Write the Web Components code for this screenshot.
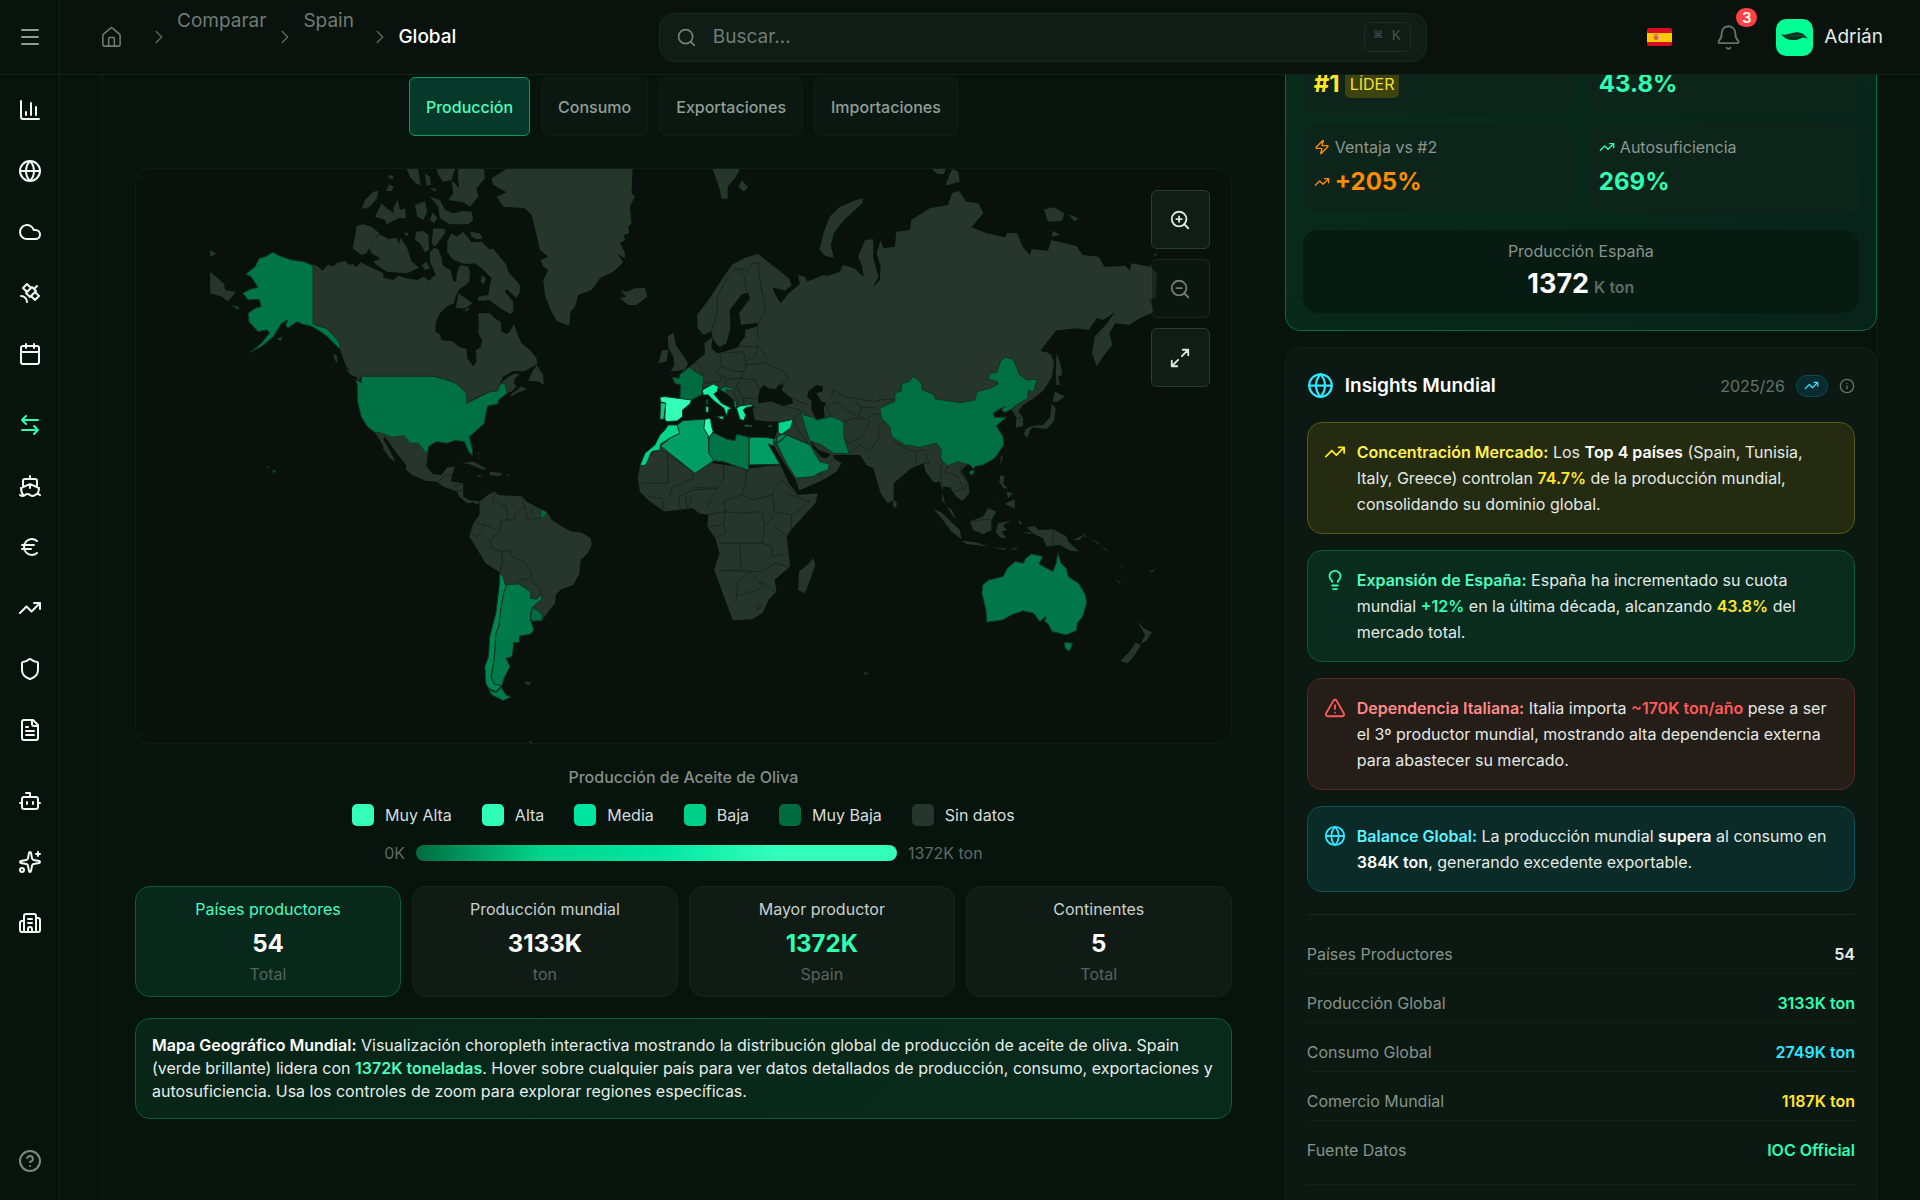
<!DOCTYPE html>
<html lang="es">
<head>
<meta charset="utf-8">
<title>Comparar · Spain · Global</title>
<style>
html,body{margin:0;height:100%}
body{background:#07130d;color:#e8efeb;font-family:Inter,"Noto Sans",sans-serif;font-size:16px;line-height:24px;
--green:#2dffb3;--mint:#4dfcc0;--yellow:#ffe62b;--cyan:#2ee6ff;--red:#ff5a5a;--muted:#87938c;--dim:#57635c;--line:#12211a}
</style>
</head>
<body>
<app-shell></app-shell>
<script>
const ICONS={
menu:'<path d="M4 5h16M4 12h16M4 19h16"/>',
chart:'<path d="M3 3v16a2 2 0 0 0 2 2h16M18 17V9M13 17V5M8 17v-3"/>',
globe:'<circle cx="12" cy="12" r="10"/><path d="M12 2a14.5 14.5 0 0 0 0 20 14.5 14.5 0 0 0 0-20M2 12h20"/>',
cloud:'<path d="M17.5 19H9a7 7 0 1 1 6.71-9h1.79a4.5 4.5 0 1 1 0 9Z"/>',
satellite:'<path d="M13 7 9 3 5 7l4 4M17 11l4 4-4 4-4-4M8 12l4 4 6-6-4-4ZM16 8l3-3M9 21a6 6 0 0 0-6-6"/>',
calendar:'<path d="M8 2v4M16 2v4M3 10h18"/><rect width="18" height="18" x="3" y="4" rx="2"/>',
swap:'<path d="M8 3 4 7l4 4M4 7h16M16 21l4-4-4-4M20 17H4"/>',
ship:'<path d="M12 10.189V14M12 2v3M19 13V7a2 2 0 0 0-2-2H7a2 2 0 0 0-2 2v6M19.38 20A11.6 11.6 0 0 0 21 14l-8.188-3.639a2 2 0 0 0-1.624 0L3 14a11.6 11.6 0 0 0 2.81 7.76M2 21c.6.5 1.2 1 2.5 1 2.5 0 2.5-2 5-2 1.3 0 1.9.5 2.5 1s1.2 1 2.5 1c2.5 0 2.5-2 5-2 1.3 0 1.9.5 2.5 1"/>',
euro:'<path d="M4 10h12M4 14h9M19 6a7.7 7.7 0 0 0-5.2-2A7.9 7.9 0 0 0 6 12c0 4.4 3.5 8 7.8 8 2 0 3.8-.8 5.2-2"/>',
trend:'<path d="M16 7h6v6M22 7l-8.500 8.500-5-5L2 17"/>',
shield:'<path d="M20 13c0 5-3.5 7.500-7.660 8.950a1 1 0 0 1-.67-.01C7.500 20.500 4 18 4 13V6a1 1 0 0 1 1-1c2 0 4.500-1.200 6.240-2.720a1.170 1.170 0 0 1 1.520 0C14.510 3.810 17 5 19 5a1 1 0 0 1 1 1z"/>',
file:'<path d="M15 2H6a2 2 0 0 0-2 2v16a2 2 0 0 0 2 2h12a2 2 0 0 0 2-2V7ZM14 2v4a2 2 0 0 0 2 2h4M10 9H8M16 13H8M16 17H8"/>',
bot:'<path d="M12 8V4H8M2 14h2M20 14h2M15 13v2M9 13v2"/><rect width="16" height="12" x="4" y="8" rx="2"/>',
sparkles:'<path d="M11.017 2.814a1 1 0 0 1 1.966 0l1.051 5.558a2 2 0 0 0 1.594 1.594l5.558 1.051a1 1 0 0 1 0 1.966l-5.558 1.051a2 2 0 0 0-1.594 1.594l-1.051 5.558a1 1 0 0 1-1.966 0l-1.051-5.558a2 2 0 0 0-1.594-1.594l-5.558-1.051a1 1 0 0 1 0-1.966l5.558-1.051a2 2 0 0 0 1.594-1.594zM20 2v4M22 4h-4"/><circle cx="4" cy="20" r="2"/>',
building:'<path d="M10 12h4M10 8h4M14 21v-3a2 2 0 0 0-4 0v3M6 10H4a2 2 0 0 0-2 2v7a2 2 0 0 0 2 2h16a2 2 0 0 0 2-2V9a2 2 0 0 0-2-2h-2M6 21V5a2 2 0 0 1 2-2h8a2 2 0 0 1 2 2v16"/>',
help:'<circle cx="12" cy="12" r="10"/><path d="M9.090 9a3 3 0 0 1 5.830 1c0 2-3 3-3 3M12 17h.01"/>',
home:'<path d="M15 21v-8a1 1 0 0 0-1-1h-4a1 1 0 0 0-1 1v8M3 10a2 2 0 0 1 .709-1.528l7-5.999a2 2 0 0 1 2.582 0l7 5.999A2 2 0 0 1 21 10v9a2 2 0 0 1-2 2H5a2 2 0 0 1-2-2z"/>',
chevron:'<path d="m9 18 6-6-6-6"/>',
search:'<circle cx="11" cy="11" r="8"/><path d="m21 21-4.350-4.350"/>',
bell:'<path d="M10.268 21a2 2 0 0 0 3.464 0M3.262 15.326A1 1 0 0 0 4 17h16a1 1 0 0 0 .74-1.673C19.410 13.956 18 12.499 18 8A6 6 0 0 0 6 8c0 4.499-1.411 5.956-2.738 7.326"/>',
zoomin:'<circle cx="11" cy="11" r="8"/><path d="m21 21-4.350-4.350M11 8v6M8 11h6"/>',
zoomout:'<circle cx="11" cy="11" r="8"/><path d="m21 21-4.350-4.350M8 11h6"/>',
expand:'<path d="M15 3h6v6M21 3l-7 7M3 21l7-7M9 21H3v-6"/>',
zap:'<path d="M4 14a1 1 0 0 1-.78-1.630l9.900-10.200a.5.5 0 0 1 .86.46l-1.920 6.020A1 1 0 0 0 13 10h7a1 1 0 0 1 .78 1.630l-9.900 10.200a.5.5 0 0 1-.86-.46l1.920-6.020A1 1 0 0 0 11 14z"/>',
bulb:'<path d="M15 14c.2-1 .7-1.700 1.500-2.500 1-.9 1.500-2.200 1.500-3.500A6 6 0 0 0 6 8c0 1 .2 2.200 1.500 3.500.7.7 1.300 1.500 1.500 2.500M9 18h6M10 22h4"/>',
alert:'<path d="m21.730 18-8-14a2 2 0 0 0-3.480 0l-8 14A2 2 0 0 0 4 21h16a2 2 0 0 0 1.730-3M12 9v4M12 17h.01"/>',
info:'<circle cx="12" cy="12" r="10"/><path d="M12 16v-4M12 8h.01"/>'
};

/* Registers an element whose open shadow root is built from its markup */
function define(tag,html){
  customElements.define(tag,class extends HTMLElement{
    constructor(){super();this.attachShadow({mode:'open'})}
    connectedCallback(){this.shadowRoot.innerHTML=typeof html==='function'?html(this):html}
  });
}
const RESET='*{box-sizing:border-box}a{color:inherit;text-decoration:none}button,input{font:inherit;color:inherit;margin:0}';

define('ui-icon',el=>{
  const s=el.getAttribute('size')||24,w=el.getAttribute('weight')||2;
  return `<style>:host{display:inline-flex;flex:none}svg{display:block}</style>
  <svg width="${s}" height="${s}" viewBox="0 0 24 24" fill="none" stroke="currentColor" stroke-width="${w}" stroke-linecap="round" stroke-linejoin="round" aria-hidden="true">${ICONS[el.getAttribute('name')]}</svg>`;
});

define('side-nav',()=>{
  const groups=[[['chart','Panel'],['globe','Mundo'],['cloud','Clima'],['satellite','Satélite'],['calendar','Calendario']],
  [['swap','Comparar'],['ship','Comercio'],['euro','Precios'],['trend','Tendencias'],['shield','Seguros'],['file','Informes']],
  [['bot','Asistente'],['sparkles','IA'],['building','Empresas']]];
  return `<style>${RESET}
  :host{display:flex;flex-direction:column;border-right:1px solid var(--line);background:#06140d}
  .top{flex:none;height:75px;border-bottom:1px solid var(--line);display:flex;align-items:center;justify-content:center;color:#8f9b94}
  button{display:flex;background:none;border:0;padding:0}
  nav{flex:1;display:flex;flex-direction:column;gap:18px;padding-top:8px}
  .g{display:flex;flex-direction:column;gap:8px}
  a{height:53px;display:flex;align-items:center;justify-content:center;color:#f3f7f5}
  a.on{color:var(--green)}
  a.help{color:#7e8983;height:79px}
  </style>
  <div class="top"><button aria-label="Menú"><ui-icon name="menu"></ui-icon></button></div>
  <nav>${groups.map(g=>`<div class="g">${g.map(([i,l])=>`<a href="#${i}" aria-label="${l}" class="${i==='swap'?'on':''}"><ui-icon name="${i}"></ui-icon></a>`).join('')}</div>`).join('')}</nav>
  <a class="help" href="#help" aria-label="Ayuda"><ui-icon name="help"></ui-icon></a>`;
});

define('bread-crumbs',`<style>${RESET}
:host{display:block}
ol{display:flex;align-items:center;gap:8px;margin:0;padding:0;list-style:none;font-size:19px;line-height:26px;color:#6f7b74}
li{display:flex;align-items:center;gap:7px}
a.t{height:58px;min-width:58px}
a.h{display:flex;width:40px}
[aria-current]{color:#fff;font-weight:500}
ui-icon[name=chevron]{color:#5a665f}
</style><nav aria-label="Ruta"><ol>
<li><a class="h" href="#home" aria-label="Inicio"><ui-icon name="home" size="23" weight="1.600"></ui-icon></a></li>
<li><ui-icon name="chevron" size="22" weight="1.600"></ui-icon><a class="t" href="#comparar">Comparar</a></li>
<li><ui-icon name="chevron" size="22" weight="1.600"></ui-icon><a class="t" href="#spain">Spain</a></li>
<li><ui-icon name="chevron" size="22" weight="1.600"></ui-icon><span aria-current="page">Global</span></li>
</ol></nav>`);

define('search-box',`<style>${RESET}
:host{display:block;flex:0 1 768px}
label{display:flex;align-items:center;gap:16px;height:49px;padding:0 15px 0 16px;background:#101c16;border:1px solid #182820;border-radius:15px;color:#75817a}
input{flex:1;min-width:0;background:none;border:0;outline:0;padding:0;font-size:19px}
input::placeholder{color:#6f7b74;opacity:1}
kbd{width:47px;height:30px;border:1px solid #1d2d25;border-radius:7px;display:flex;align-items:center;justify-content:center;font:15px/20px "Liberation Mono","DejaVu Sans Mono",monospace;color:#45524b}
</style><label><ui-icon name="search" size="21" weight="1.800"></ui-icon><input type="text" placeholder="Buscar..." aria-label="Buscar"><kbd>⌘ K</kbd></label>`);

define('user-tools',`<style>${RESET}
:host{display:flex;align-items:center}
button{background:none;border:0;padding:0;display:flex;align-items:center}
.flag{padding:0 18px}
.bell{position:relative;margin-left:24px;width:28px;justify-content:center;color:#66726b}
.badge{position:absolute;left:22px;top:-16px;min-width:21px;height:19px;border-radius:10px;background:#ff4245;color:#fff;font-size:15px;font-weight:600;line-height:19px;text-align:center}
.user{margin-left:34px;gap:11px;font-size:19px;line-height:26px;color:#e3eae6}
</style>
<button class="flag" aria-label="Idioma"><svg width="25" height="18" viewBox="0 0 25 18"><rect width="25" height="18" rx="2" fill="#d80d22"/><path d="M0 5h25v9H0z" fill="#ffc800"/><path d="M6 7h1v5H6zM11 7h1v5h-1z" fill="#c9b183"/><path d="M7 8h4v3q-2 2-4 0z" fill="#d9604a"/><path d="M7.500 6h3v1.500h-3z" fill="#c8702e"/></svg></button>
<button class="bell" aria-label="Avisos"><ui-icon name="bell" size="27" weight="1.600"></ui-icon><span class="badge">3</span></button>
<button class="user"><svg width="37" height="37" viewBox="0 0 37 37"><rect width="37" height="37" rx="10" fill="#00ff94"/><path d="M5 15C9 16.500 12 15 16 14c7-2 12 0 15 5l2 2-3-2c-4-2-5 1.500-11 2-7 .5-11-2-14-6z" fill="#06301f"/><path d="M9 17c6 1 12-2 20 0" stroke="#0b7048" fill="none" stroke-width=".7"/></svg><span>Adrián</span></button>`);

define('top-bar',`<style>:host{display:flex;align-items:center;justify-content:space-between;height:74px;padding:0 37px 0 40px;border-bottom:1px solid var(--line);background:#09120d}</style>
<bread-crumbs></bread-crumbs><search-box></search-box><user-tools></user-tools>`);

define('metric-tabs',`<style>${RESET}
:host{display:flex;justify-content:center;gap:11px}
button{height:59px;padding:0 16px;border:1px solid #101e17;border-radius:6px;background:#0a1811;color:#929e97;font-size:16px;font-weight:500}
button.on{background:#07392a;border-color:#0b9a64;color:var(--mint)}
</style><button class="on">Producción</button><button>Consumo</button><button>Exportaciones</button><button>Importaciones</button>`);

define('world-map',`<style>${RESET}
:host{display:block;position:relative;border:1px solid #0f1d16;border-radius:15px;overflow:hidden;background:#08110c}
svg.map{display:block;width:100%;height:auto}
svg.map path{vector-effect:non-scaling-stroke;stroke-width:1;stroke-linejoin:round}
.n{fill:#26362d}.s{fill:#08110c}
.b{fill:none;stroke:#17261e}
.c{stroke:#123324}
.ctl{position:absolute;top:21px;right:21px;display:flex;flex-direction:column;gap:10px}
button{width:59px;height:59px;padding:0;display:flex;align-items:center;justify-content:center;background:#101c16;border:1px solid #2c3b33;border-radius:6px;color:#dde5e1}
button:disabled{opacity:.5}
</style>
<svg class="map" viewBox="136 169 1095 574" role="img" aria-label="Mapa mundial de producción">
<g transform="translate(330 165) scale(.33333)">
<path class="n" d="M-51 297-35 305-22 317-8 300 10 304 22 293 45 288 58 300 68 296 78 306 92 292 120 305 160 325 160 338 190 345 205 332 230 340 262 345 280 335 300 348 305 338 318 330 300 290 300 262 312 248 325 252 335 280 338 300 350 310 362 315 370 348 378 350 382 320 392 300 415 305 420 320 418 350 400 365 388 372 375 400 372 415 350 425 330 445 318 470 316 500 330 508 335 525 370 530 385 545 410 552 412 580 430 605 440 590 438 555 452 548 457 525 445 505 447 480 445 445 480 445 495 460 512 470 515 500 530 507 540 500 552 478 562 505 575 535 600 555 620 580 622 598 600 610 580 620 550 618 520 635 508 657 530 640 555 625 570 628 555 640 552 655 560 665 545 680 530 685 525 655 512 655 503 675 480 680 440 698 410 714 405 690 380 655 345 642 315 634 95 634 85 645 60 615 48 605 40 580 30 555 5 510-10 490-40 485-51 478Z
M540 690 575 665 592 672 560 685 545 694ZM620 600 640 630 642 660 625 650 595 648 605 625ZM48 612 75 622 95 650 85 640 60 628ZM10 565 22 575 22 595 14 585Z
M80 182 100 178 125 185 148 205 125 235 110 265 95 270 68 250 75 215Z
M150 208 175 222 200 218 206 238 212 218 232 250 245 290 268 308 230 325 170 320 140 300 130 290 152 281 125 265 118 250 130 228Z
M155 115 170 130 193 145 190 130 203 105 210 135 225 130 228 160 205 160 170 178 165 165 135 155Z
M130 80 145 78 142 100 120 125 95 132 105 105ZM178 58 192 65 185 78 168 78ZM178 30 190 32 190 42 176 40ZM230 12 265 12 272 60 260 58 240 35ZM285 25 300 35 303 60 290 62Z
M320 12 375 12 365 45 340 50 325 30ZM385 12 462 12 465 40 440 70 445 95 420 125 400 112 355 105 370 85 365 45 388 70 384 40Z
M300 95 330 105 345 135 370 145 400 138 425 140 430 165 415 178 360 178 330 160 325 125ZM255 120 285 108 292 140 280 165 262 155ZM308 142 322 160 312 175 300 165ZM300 68 320 72 315 80Z
M258 200 280 198 295 210 298 255 285 262 270 235 255 225ZM310 190 345 192 345 205 315 245 305 235ZM222 203 236 203 230 215Z
M365 205 380 215 400 200 425 232 455 230 480 255 488 250 510 275 530 300 535 320 570 360 570 380 560 400 530 372 525 380 550 410 550 440 540 448 490 415 480 405 445 408 445 395 475 390 480 360 485 340 455 310 435 295 405 297 370 285 352 262 352 230Z
M420 200 450 205 458 222 440 222 425 215ZM275 300 290 290 300 310 285 315ZM385 385 410 402 428 415 405 430 378 430ZM400 440 415 425 417 435ZM455 330 468 340 462 358 452 350Z
M530 12 908 12 905 85 915 95 900 125 905 175 895 185 898 205 882 210 885 225 870 235 885 262 885 280 862 265 880 292 850 320 810 340 785 375 745 390 735 425 722 440 718 482 680 468 660 430 645 390 640 345 655 315 640 305 632 285 655 275 630 255 620 210 605 150 585 130 520 125 500 95 530 82 490 60 485 40Z
M872 375 890 380 915 370 945 368 952 395 920 420 895 420 870 400 888 395Z"/>
</g>
<g transform="scale(.40816 .33333)">
<path class="n" d="M515 815 548 850 552 870 578 875 558 905 545 890 515 880ZM515 750 530 762 515 770Z"/>
<path class="c" fill="#007545" d="M668 757 690 770 715 780 745 785 767 797 767 972 780 978 800 985 812 1000 830 1025 836 1050 822 1035 800 1008 785 995 765 980 740 972 728 965 705 985 700 975 705 960 690 970 670 1010 640 1040 612 1058 640 1030 660 1000 655 990 632 995 610 965 608 940 625 925 640 920 635 898 608 900 595 880 612 868 632 862 615 830 602 822 625 800 635 775 650 770ZM568 916 585 922 583 928ZM680 1018 690 1010 688 1022Z"/>
</g>
<g transform="translate(0 400) scale(.40816 .33333)">
<path class="c" fill="#007143" d="M886-71 1062-71 1090-62 1118-50 1143-19 1144 10 1168-5 1200-24 1219-28 1227-50 1237-50 1243-20 1222 0 1220 12 1195 18 1190 45 1187 70 1160 100 1150 110 1158 150 1157 167 1148 155 1138 125 1115 122 1095 130 1070 125 1050 140 1048 160 1040 155 1025 130 1005 130 990 108 960 112 935 100 918 97 900 80 885 50 876 5 876-40 872-62 885-52ZM668 210 676 214 671 220ZM655 200 660 203 656 204Z"/>
<path class="n" d="M918 97 935 100 960 112 990 108 1005 130 1025 130 1040 155 1048 160 1045 200 1060 222 1082 225 1095 203 1115 200 1108 225 1105 245 1135 250 1135 290 1150 300 1175 305 1170 315 1160 308 1145 310 1125 290 1120 275 1085 260 1070 245 1045 243 1010 225 995 210 995 195 975 165 955 130 942 110 940 120 955 150 970 187 955 175 938 145 940 140 925 110ZM1130 190 1160 185 1190 205 1185 210 1150 192ZM1200 215 1230 220 1225 228 1200 226ZM1168 225l14 2-8 4zM1240 224l12 1-8 4zM1168 155l8 5-3 3zM1172 170l4 8-4-2z
M1175 305 1195 285 1212 275 1220 285 1280 290 1290 305 1320 325 1340 335 1352 360 1375 378 1400 395 1425 398 1448 415 1450 435 1440 460 1423 480 1420 520 1405 555 1375 568 1362 585 1360 610 1335 650 1328 665 1300 660 1240 560 1225 518 1190 490 1165 440 1150 410 1160 370 1175 345ZM1283 850l8-5 10 3-4 8zM1295 1028l6-6 4 8z"/>
<path class="b" d="M1212 278 1208 300 1240 320 1245 360 1228 362 1225 395 1200 420 1205 445 1228 455 1232 480 1225 518M1160 368 1190 375 1225 395M1190 375 1170 410 1155 405M1240 360 1262 360 1260 345 1285 320 1280 292M1285 320 1295 358 1325 355M1305 325 1300 345M1228 455 1250 450 1255 470 1285 485 1303 520 1300 535 1275 540 1270 552M1300 535 1325 570 1325 590M1075 245 1090 225 1108 225M1110 262 1135 250M1120 275 1135 268"/>
<path class="c" fill="#007a4a" d="M1240 555 1270 552 1300 575 1300 595 1315 598 1325 585 1328 597 1305 622 1300 640 1300 660 1308 690 1300 703 1273 708 1272 728 1258 728 1258 742 1255 770 1240 775 1250 800 1235 835 1230 858 1210 852 1203 830 1208 800 1212 760 1215 700 1222 680 1228 620 1235 575ZM1197 868 1215 878 1228 862 1240 885 1253 892 1232 902 1205 885Z"/>
<path class="c" fill="#008651" d="M1225 518 1232 530 1240 560 1235 575 1228 620 1222 680 1215 700 1212 760 1208 800 1203 830 1210 852 1230 858 1225 862 1215 875 1197 865 1190 850 1188 800 1197 770 1200 710 1215 640 1223 560Z"/>
<path class="c" fill="#006c41" d="M1305 622 1330 643 1328 662 1305 664 1300 655ZM1325 328 1340 337 1335 352 1325 353Z"/>
</g>
<g transform="translate(640 0) scale(.40816 .33333)">
<path class="n" d="M140 945 165 905 195 850 225 795 255 775 290 762 308 780 330 800 365 835 372 855 355 872 325 862 330 880 345 910 365 880 392 852 388 825 405 830 410 845 450 825 460 828 490 815 498 795 525 805 548 830 545 800 535 770 552 720 572 718 572 775 585 830 570 865 588 840 590 800 580 760 590 722 597 745 625 740 628 695 662 690 665 660 710 625 755 615 765 580 782 572 800 605 830 610 842 640 812 682 835 692 850 700 895 712 900 698 925 700 938 740 955 765 960 748 1000 752 1008 720 1070 738 1085 765 1125 770 1138 800 1190 798 1200 812 1205 790 1252 800 1267 820 1265 890 1250 900 1260 935 1225 955 1200 975 1165 970 1150 1000 1158 1035 1135 1070 1120 1100 1108 1060 1115 1010 1145 970 1163 938 1135 960 1120 955 1100 990 1070 985 1020 992 980 1055 1000 1058 1015 1085 1010 1130 990 1170 960 1200 420 1200 300 1150 200 1170 150 1140 130 1110 140 1085 160 1072 158 1030 178 1012 175 1045 190 1060 210 1055 240 1052 245 1030 258 1010 258 990 290 978 288 968 248 975 243 940 270 895 265 878 250 882 220 930 222 985 212 1030 195 1042 180 1020 175 995 155 1005 142 985Z
M548 595 545 610 500 660 475 700 468 735 475 773 455 768 440 750 450 700 465 650 490 620 530 600ZM178 507 245 507 235 530 215 560 215 598 200 595 195 565ZM250 540 265 562 255 575 242 560ZM715 507 750 507 745 522 730 522ZM765 507 780 515 784 545 748 557ZM990 628 1015 622 1040 640 1035 662 1000 665ZM1050 642 1075 655 1065 665ZM1012 692l18 12-20 6zM1258 765l8-5v8z
M68 1010 82 998 88 1035 105 1065 118 1090 110 1110 75 1115 85 1095 82 1070 70 1045ZM45 1090 55 1050 70 1050 65 1085Z"/>
<path class="b" d="M175 995 190 940 190 890 215 830 235 805 255 825 262 875M235 805 265 812 275 790 290 790 300 800M290 790 295 850 308 930 290 970 288 1005 300 1040 330 1075 362 1125 355 1155M420 1160 410 1130 430 1100 495 1095 500 1065 555 1048 600 1065 630 1105 665 1125 735 1110 745 1090 800 1115 855 1110"/>
</g>
<g transform="translate(640 400) scale(.40816 .33333)">
<path class="n" d="M40 150 60 130 180 190 265 205 345 195 365 250 388 285 436 280 430 310 400 350 370 390 360 410 368 500 330 540 335 575 315 600 300 640 275 658 228 662 215 620 200 570 182 510 195 460 185 415 165 380 168 345 145 340 130 325 60 335 20 300 0 275-5 235 0 200 15 180ZM425 475 430 495 405 580 388 570 390 515 410 495Z
M500 165 540 165 555 195 572 205 590 280 607 310 622 300 622 250 665 205 695 190 700 215 720 248 735 245 742 280 745 300 752 320 765 330 775 360 765 345 752 320 740 300 742 260 760 262 775 290 790 303 808 280 805 250 785 215 800 195 780 120 700 0 400 0ZM620 298 630 308 628 325 620 318Z
M1218 662 1235 685 1255 697 1240 725 1228 730 1238 705ZM1215 728 1228 735 1210 770 1195 790 1178 783 1200 755ZM549 815l12 6-10 5z"/>
<path class="b" d="M52 150 132 217 183 183 205 185 265 212 265 195 345 195M68 165V250H5M132 217 130 235 80 262 72 290M205 185V240L190 265 132 262M190 265 165 320M262 210 258 250 250 285 205 305M250 285 275 300 325 285M345 240 330 265 325 285 330 335M345 235 388 290M360 280 415 305 375 345M205 305 210 335 168 345M210 335 250 340 300 335 305 380 300 430 195 430M330 335 372 345 370 390M305 380 330 345M330 380 360 410M300 430 325 440 322 470 365 460M245 430 248 510 195 512 300 515 330 490 365 500M270 515 240 545 235 605M235 590 290 570 305 550 330 575M270 515 290 545 305 550M290 610l8 8-8 10-8-8zM100 335 95 290 130 270 190 265M60 335 55 295 20 290M115 325 112 285M120 325 128 285M165 380 205 375 210 335M185 415 210 400 205 375M500 165 515 130 545 120 560 80 585 60M560 180 575 150 600 120"/>
<path class="c" fill="#00774a" d="M840 555 855 540 890 530 900 505 920 485 940 490 945 475 960 462 988 470 978 492 1012 515 1020 490 1024 458 1032 490 1045 505 1050 530 1075 550 1092 585 1095 610 1085 650 1072 670 1070 692 1045 705 1010 695 1000 672 992 665 995 650 980 665 965 640 940 633 910 645 890 660 850 667 848 630 838 580ZM1040 727 1061 730 1052 755 1042 745Z"/>
</g>
<g transform="translate(640 320) scale(.33333)">
<path class="n" d="M148 142 197 100 240 100 330 70 560 0 780 0 780 425 690 412 655 405 580 405 535 390 512 362 520 385 545 412 560 415 578 398 582 415 605 430 590 455 550 480 478 512 468 480 440 440 402 378 388 366 405 355 413 330 415 305 380 305 345 300 338 268 345 258 335 256 300 262 290 268 280 240 262 222 240 210 235 195 185 205Z"/>
<path class="s" d="M362 205 372 195 385 205 408 208 415 195 432 193 425 210 455 235 460 250 430 258 395 245 355 250 355 230ZM505 215 530 195 550 200 548 215 530 220 545 245 560 250 552 262 555 295 530 298 515 270 515 245 502 230Z"/>
<path class="b" d="M165 125 180 140 192 170M240 100 245 140 230 155 245 170 240 185 190 190M245 140 290 155 315 155 318 125 310 95 245 100M300 80 355 80 380 110 375 128 318 135M355 80 345 110 318 125M375 128 440 160 445 180 415 195M315 155 300 175 260 178 245 170M300 175 290 200 310 235 350 235M260 178 255 200M300 175 345 180 360 210M290 200 280 215 295 245 290 265M310 235 312 255M430 258 480 270 482 275M455 235 505 255M460 298 480 280M460 298 475 330 505 370 440 345M575 290 560 260 590 245 620 270 655 290 680 295M612 305 640 295 680 300 700 280 720 285M575 235 580 210 620 230 670 240 700 245 750 235M612 350 625 370 660 355 680 330 690 300M628 402 660 375 690 395 720 350 715 320M478 475 540 460 550 480M568 432 580 418M660 262 700 262 715 270M650 250 665 262 655 290"/>
<path class="c" fill="#006b3f" d="M97 172 118 175 120 163 148 142 170 158 192 170 188 205 185 225 150 242 120 235 122 195 105 190ZM198 240h6v14l-5-2z"/>
<path class="c" fill="#33ffb8" d="M60 232 75 230 155 240 150 252 128 270 128 290 112 303 80 305 75 298 76 250 62 245Z"/>
<path class="c" fill="#14c283" d="M62 248 78 250 72 298 60 298Z"/>
<path class="c" fill="#12f2a2" d="M187 210 220 192 236 200 232 215 222 222 245 250 275 265 265 270 260 288 252 265 225 245 205 225 190 225ZM230 290 250 288 250 300ZM198 258 207 262 205 278 198 276ZM290 265 300 258 335 253 338 260 320 262 310 270 318 285 312 302 300 298ZM315 315 337 317 335 321 315 319Z"/>
<path class="c" fill="#007f4d" d="M240 208 255 200 283 207 280 212 258 208 262 222ZM283 238 290 245 290 268 283 258ZM383 318 398 316 392 322Z"/>
<path class="c" fill="#00d58c" d="M85 315 112 315 120 340 90 355 62 372 60 390 35 395 18 435 0 438 15 400 45 375 60 345 75 330ZM415 308 460 298 452 325 425 343 415 338Z"/>
<path class="c" fill="#009e66" d="M112 315 130 302 195 298 198 310 192 325 205 345 207 400 222 422 165 460 62 378 90 355 120 340ZM328 352 370 352 402 356 400 378 385 372 420 433 328 435Z"/>
<path class="c" fill="#2dffb5" d="M195 298 212 295 215 318 220 335 208 352 192 325Z"/>
<path class="c" fill="#007447" d="M208 352 220 338 262 358 285 362 290 342 327 352V452L250 425 222 422 207 400ZM482 275 492 285 520 292 530 300 575 290 612 305V350L628 402 580 400 545 375 510 362 495 320Z"/>
<path class="c" fill="#008453" d="M410 370 440 345 510 375 525 400 540 425 568 432 565 450 540 458 520 470 468 475 440 430ZM410 350 430 342 440 345 425 362 410 370ZM403 360 413 345 409 370Z"/>
</g>
<g transform="translate(880 330) scale(.33333)">
<path class="n" d="M0 0H530L480 62 515 75 522 110 500 165 455 208 430 225 415 245 430 262V288L408 293 410 265 395 238 430 205 200 240 0 300ZM525 185 555 200 535 215 518 215ZM515 222 528 235 522 275 500 298 460 292 440 310 435 300 455 288 490 285 512 260ZM438 300 450 305 442 325 432 312ZM530 70 540 95 548 135 535 140 540 165 530 165 528 130ZM362 380 370 380 362 405ZM362 435 375 440 370 462 385 475 370 475 358 455ZM380 485 400 490 385 505ZM378 520 405 508V535L380 525ZM330 515 355 490 335 512Z
M162 538 185 548 240 600 245 628 215 605 185 565ZM245 632 290 638 325 650 260 642ZM270 575 310 560 325 535 350 545 335 570V600L310 613 280 600ZM355 580 395 572 370 585 375 595 385 600 365 605 380 625 360 622 348 605ZM335 652 380 656 375 660ZM388 662 413 650 408 658ZM415 570 427 578 421 586ZM425 608H455V613Z
M440 592 465 588 475 600 520 598 560 620 565 635 598 665 570 662 540 645 500 650 490 625 462 612ZM580 630 610 615 600 630ZM605 605 620 620 615 622ZM630 625 660 640 655 642ZM662 645 687 665 677 661ZM705 745 725 759 720 761ZM722 703 730 713H726ZM808 725 828 715 818 727Z"/>
<path class="c" fill="#007043" d="M0 235 20 225 45 215 45 190 65 182 65 160 88 155 100 138 125 160 128 180 160 192 168 208 200 212 240 218 285 210 292 185 330 175 355 162 352 155 325 148 330 130 350 128 362 95 375 82 400 88 412 115 418 132 440 150 472 148 462 185 445 182 445 205 410 225 395 238 375 248 365 240 375 230 355 240 340 250 345 262 380 262 350 288 370 320 372 345 345 385 310 405 285 410 282 418 270 405 250 400 235 395 205 408 188 395 182 380 185 360 170 340 120 352 75 345 35 320 30 290 5 265ZM272 422H284L280 434 268 432Z"/>
<path class="b" d="M0 208 45 210M40 335 100 365 135 360M105 365 110 400M135 370 150 400 130 400M188 395 182 420 185 470M205 408 195 425 235 440 250 475 225 485M235 395 250 430 265 460 250 480M520 598V650M395 238 410 265 430 262M275 575 315 568 335 570"/>
</g>
</svg>
<div class="ctl"><button aria-label="Acercar"><ui-icon name="zoomin" size="22"></ui-icon></button><button aria-label="Alejar" disabled><ui-icon name="zoomout" size="22"></ui-icon></button><button aria-label="Restablecer"><ui-icon name="expand" size="22"></ui-icon></button></div>`);

define('map-legend',()=>`<style>${RESET}
:host{display:flex;flex-direction:column;align-items:center;font-size:16px}
h3{margin:0;font-size:16px;font-weight:500;line-height:24px;color:#848f89}
ul{display:flex;gap:30px;margin:14px 0 0;padding:0;list-style:none;color:#d5ddd9}
li{display:flex;align-items:center;gap:11px;line-height:24px}
i{width:22px;height:22px;border-radius:5px}
.scale{display:flex;align-items:center;gap:11px;margin-top:14px;color:#5f6b64;line-height:24px}
.bar{width:481px;height:16px;border-radius:8px;background:linear-gradient(90deg,#006b40,#00d48c 26%,#00e6a0 50%,#33ffbb 75%)}
</style><h3>Producción de Aceite de Oliva</h3>
<ul>${[['#33ffbb','Muy Alta'],['#2fffb9','Alta'],['#00e6a0','Media'],['#00cf8a','Baja'],['#006b40','Muy Baja'],['#26362d','Sin datos']].map(([c,t])=>`<li><i style="background:${c}"></i><span>${t}</span></li>`).join('')}</ul>
<div class="scale"><span>0K</span><div class="bar"></div><span>1372K ton</span></div>`);

define('stat-card',`<style>
:host{display:flex;flex-direction:column;align-items:center;flex:1;padding:9px 16px 11px;border:1px solid #17251e;border-radius:15px;background:#101b16;text-align:center;box-sizing:border-box}
:host([active]){background:#07281b;border-color:#0b5c3f}
.l{line-height:26px;color:#c9d2cd}:host([active]) .l{color:var(--mint)}
.v{font-size:24px;font-weight:700;line-height:32px;margin:6px 0 3px;color:#fff}:host([accent]) .v{color:var(--green)}
.s{line-height:22px;color:var(--dim)}
</style><span class="l"><slot name="label"></slot></span><span class="v"><slot></slot></span><span class="s"><slot name="sub"></slot></span>`);

define('info-note',`<style>:host{display:block;padding:15px 16px;border:1px solid #0b5c3f;border-radius:15px;background:linear-gradient(135deg,#082517,#082a1c);line-height:23px;color:#e6edea}
strong{color:#fff;font-weight:600}em{font-style:normal;font-weight:600;color:var(--mint)}</style>
<strong>Mapa Geográfico Mundial:</strong> Visualización choropleth interactiva mostrando la distribución global de producción de aceite de oliva. Spain (verde brillante) lidera con <em>1372K toneladas</em>. Hover sobre cualquier país para ver datos detallados de producción, consumo, exportaciones y autosuficiencia. Usa los controles de zoom para explorar regiones específicas.`);

define('map-panel',`<style>:host{display:flex;flex-direction:column;min-width:0}
metric-tabs{margin-bottom:32px}map-legend{margin-top:21px}.stats{display:flex;gap:11px;margin:21px 0}</style>
<metric-tabs></metric-tabs><world-map></world-map><map-legend></map-legend>
<div class="stats">
<stat-card active><span slot="label">Países productores</span>54<span slot="sub">Total</span></stat-card>
<stat-card><span slot="label">Producción mundial</span>3133K<span slot="sub">ton</span></stat-card>
<stat-card accent><span slot="label">Mayor productor</span>1372K<span slot="sub">Spain</span></stat-card>
<stat-card><span slot="label">Continentes</span>5<span slot="sub">Total</span></stat-card>
</div><info-note></info-note>`);

define('kpi-cell',`<style>:host{display:flex;flex-direction:column;justify-content:flex-end;gap:7px;height:88px;padding:11px 10px 12px;box-sizing:border-box;border:1px solid #0c271a;border-radius:15px;background:#0c2419}
.l,.v{display:flex;align-items:center;gap:5px}.l{line-height:22px;color:#8b9891}.v{font-size:24px;font-weight:700;line-height:34px}</style>
<div class="l"><slot name="label"></slot></div><div class="v"><slot></slot></div>`);

define('leader-card',`<style>
:host{display:block;padding:17px;border:1px solid #0a6a45;border-radius:15px;background:linear-gradient(135deg,#082b1b,#07231a)}
.grid{display:grid;grid-template-columns:1fr 1fr;gap:10px 14px}
.y{color:var(--yellow)}.g{color:var(--green)}.o{color:#ff8c00}
.tag{font-size:16px;font-weight:400;line-height:24px;padding:2px 5px;border-radius:5px;background:#3d4410;color:#f5df3c}
.total{margin-top:18px;padding:10px 11px 11px;border-radius:15px;background:#081b12;text-align:center;color:#87938c;line-height:22px}
.total p{margin:0}.total .n{display:flex;justify-content:center;align-items:baseline;gap:5px;font-size:16px;line-height:20px;margin-top:4px;color:#5f6b64;font-weight:600}
.total strong{font-size:27px;line-height:36px;color:#fff;font-weight:700}
</style>
<div class="grid">
<kpi-cell><span class="y">#1</span><span class="tag">LÍDER</span></kpi-cell>
<kpi-cell><span class="g">43.8%</span></kpi-cell>
<kpi-cell><ui-icon class="o" slot="label" name="zap" size="16"></ui-icon><span slot="label">Ventaja vs #2</span><ui-icon class="o" name="trend" size="16"></ui-icon><span class="o">+205%</span></kpi-cell>
<kpi-cell><ui-icon class="g" slot="label" name="trend" size="16"></ui-icon><span slot="label">Autosuficiencia</span><span class="g">269%</span></kpi-cell>
</div>
<div class="total"><p>Producción España</p><p class="n"><strong>1372</strong><span>K ton</span></p></div>`);

define('insight-card',el=>`<style>
:host{display:flex;gap:11px;padding:16px;border:1px solid var(--bd);border-radius:15px;background:var(--bg);line-height:26px;color:#e3eae6}
:host([tone=yellow]){--bg:#242b10;--bd:#565910;--c:#ffe62b;--t:#fff04f}
:host([tone=green]){--bg:#0a2c1f;--bd:#0a5a3e;--c:#2dffb3;--t:#4dfcc0}
:host([tone=red]){--bg:#251d17;--bd:#5c2722;--c:#ff5a5a;--t:#ff8a8a}
:host([tone=cyan]){--bg:#0a2b28;--bd:#0a5257;--c:#2ee6ff;--t:#5cf2ff}
ui-icon{color:var(--c);padding:2px 0;height:22px}p{margin:0}b{font-weight:600;color:var(--t)}
</style><ui-icon name="${el.getAttribute('icon')}" size="22"></ui-icon><p><b>${el.getAttribute('heading')}</b> <slot></slot></p>`);

define('insights-card',`<style>
:host{display:block;padding:22px 21px;border:1px solid #102019;border-radius:15px;background:#0b1912}
header{display:flex;align-items:center;gap:11px;height:31px;margin-bottom:21px;color:#66726b}
header>ui-icon[name=globe]{color:var(--cyan)}
h2{margin:0;flex:1;font-size:19px;line-height:28px;font-weight:600;color:#fff}
.pill{display:flex;align-items:center;justify-content:center;width:30px;height:20px;border:1px solid #0a4a55;border-radius:11px;background:#082b30;color:var(--cyan)}
.list{display:flex;flex-direction:column;gap:16px}
strong{font-weight:600;color:#fff}.y{color:var(--yellow)}.g{color:var(--green)}.r{color:#ff5a5a}.c{color:#2ee6ff}
dl{display:flex;flex-direction:column;gap:10px;margin:22px 0 0;padding:20px 0 16px;border-top:1px solid #1a2821;border-bottom:1px solid #14231b}
dl div{display:flex;justify-content:space-between;padding:6px 0;line-height:26px;border-bottom:1px solid #12211a}
dl div:last-child{border:0;padding-bottom:5px}
dt{color:#87938c}dd{margin:0;font-weight:600}
.foot{height:48px}
</style>
<header><ui-icon name="globe" size="27"></ui-icon><h2>Insights Mundial</h2><span>2025/26</span><span class="pill"><ui-icon name="trend" size="15"></ui-icon></span><ui-icon name="info" size="16"></ui-icon></header>
<div class="list">
<insight-card tone="yellow" icon="trend" heading="Concentración Mercado:">Los <strong>Top 4 países</strong> (Spain, Tunisia, Italy, Greece) controlan <strong class="y">74.7%</strong> de la producción mundial, consolidando su dominio global.</insight-card>
<insight-card tone="green" icon="bulb" heading="Expansión de España:">España ha incrementado su cuota mundial <strong class="g">+12%</strong> en la última década, alcanzando <strong class="y">43.8%</strong> del mercado total.</insight-card>
<insight-card tone="red" icon="alert" heading="Dependencia Italiana:">Italia importa <strong class="r">~170K ton/año</strong> pese a ser el 3º productor mundial, mostrando alta dependencia externa para abastecer su mercado.</insight-card>
<insight-card tone="cyan" icon="globe" heading="Balance Global:">La producción mundial <strong>supera</strong> al consumo en <strong>384K ton</strong>, generando excedente exportable.</insight-card>
</div>
<dl>
<div><dt>Países Productores</dt><dd>54</dd></div>
<div><dt>Producción Global</dt><dd class="g">3133K ton</dd></div>
<div><dt>Consumo Global</dt><dd class="c">2749K ton</dd></div>
<div><dt>Comercio Mundial</dt><dd class="y">1187K ton</dd></div>
<div><dt>Fuente Datos</dt><dd class="g">IOC Official</dd></div>
</dl><div class="foot"></div>`);

define('app-shell',`<style>
:host{display:grid;grid-template-columns:60px minmax(0,1fr);height:100vh;overflow:hidden}
.body{display:flex;flex-direction:column;min-width:0;min-height:0}
main{flex:1;min-height:0;overflow:hidden;padding:0 42px}
/* The page is scrolled: the first KPI labels have passed under the header */
.sheet{display:grid;grid-template-columns:50fr 27fr;gap:53px;margin-top:-67px;padding-left:32px;border:1px solid #0f1d16;border-width:0 1px;min-height:1300px}
map-panel{padding-top:69px}
.right{display:flex;flex-direction:column;gap:16px;min-width:0}
</style>
<side-nav></side-nav>
<div class="body"><top-bar></top-bar><main><div class="sheet"><map-panel></map-panel><div class="right"><leader-card></leader-card><insights-card></insights-card></div></div></main></div>`);
</script>
</body>
</html>
